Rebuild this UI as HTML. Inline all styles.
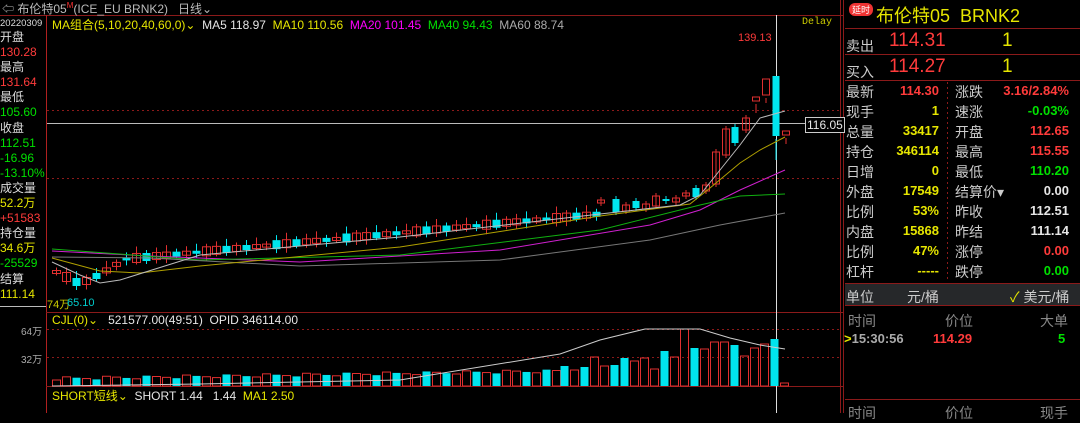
<!DOCTYPE html>
<html><head><meta charset="utf-8"><style>
*{margin:0;padding:0;box-sizing:border-box}
body{width:1080px;height:413px;background:#000;overflow:hidden;position:relative;font-family:"Liberation Sans","Noto Sans CJK SC",sans-serif;font-size:12px;color:#c8c8c8}
.a{position:absolute;white-space:nowrap}
.r{color:#ff3b3b}.g{color:#00e000}.y{color:#e6e600}.w{color:#e6e6e6}.m{color:#ff00ff}.gr{color:#aaa}
.rp div{position:absolute;white-space:nowrap;font-size:14px}
.num{font-weight:bold;text-align:right;font-size:13px!important}
</style></head><body>
<svg class="a" style="left:0;top:0" width="1080" height="413" id="s"></svg>
<div class="a" style="left:2px;top:0;font-size:12px;color:#bbb">⇦ 布伦特05<sup style="color:#f33;font-size:8px">M</sup>(ICE_EU BRNK2)&nbsp;&nbsp;&nbsp;日线⌄</div>
<div class="a" style="left:0;top:17px;font-size:9.5px;color:#ddd;line-height:14px">20220309</div>
<div class="a" style="left:0;top:30px;font-size:12px;line-height:15.1px;color:#ddd">开盘<br><span class="r">130.28</span><br>最高<br><span class="r">131.64</span><br>最低<br><span class="g">105.60</span><br>收盘<br><span class="g">112.51</span><br><span class="g">-16.96</span><br><span class="g">-13.10%</span><br>成交量<br><span class="y">52.2万</span><br><span class="r">+51583</span><br>持仓量<br><span class="y">34.6万</span><br><span class="g">-25529</span><br>结算<br><span class="y">111.14</span></div>
<div class="a" style="left:52px;top:16px;font-size:12px"><span class="y">MA组合(5,10,20,40,60,0)⌄</span>&nbsp;&nbsp;<span class="w">MA5 118.97</span>&nbsp;&nbsp;<span class="y">MA10 110.56</span>&nbsp;&nbsp;<span class="m">MA20 101.45</span>&nbsp;&nbsp;<span class="g">MA40 94.43</span>&nbsp;&nbsp;<span class="gr">MA60 88.74</span></div>
<div class="a y" style="left:802px;top:17px;font-family:'Liberation Mono',monospace;font-size:10px;color:#cc0">Delay</div>
<div class="a r" style="left:738px;top:32px;font-size:11px">139.13</div>
<div class="a w" style="left:805px;top:117px;font-size:12px;border:1px solid #ccc;padding:0 1px;background:#000">116.05</div>
<div class="a" style="left:47px;top:296px;font-size:11px;color:#cc0">74万</div>
<div class="a" style="left:67px;top:297px;font-size:11px;color:#0cc">65.10</div>
<div class="a" style="left:52px;top:313px;font-size:12px"><span class="y">CJL(0)⌄</span>&nbsp;&nbsp;&nbsp;<span class="w">521577.00(49:51)&nbsp;&nbsp;OPID 346114.00</span></div>
<div class="a gr" style="left:21px;top:323px;font-size:10px">64万</div>
<div class="a gr" style="left:21px;top:351px;font-size:10px">32万</div>
<div class="a" style="left:52px;top:387px;font-size:12px"><span class="y">SHORT短线⌄</span>&nbsp;&nbsp;<span class="w">SHORT 1.44&nbsp;&nbsp;&nbsp;1.44</span>&nbsp;&nbsp;<span class="y">MA1 2.50</span></div>
<div class="rp">
<div style="left:849px;top:3px;background:#e33;color:#fff;font-size:9px;border-radius:6px;padding:0 3px">延时</div>
<div style="left:876px;top:2px;font-size:18px;color:#e6e600">布伦特05&nbsp;&nbsp;BRNK2</div>
<div style="left:846px;top:36px;color:#ccc">卖出</div><div style="left:889px;top:30px;font-size:19px;color:#ff3b3b">114.31</div><div style="left:1002px;top:30px;font-size:19px;color:#e6e600">1</div>
<div style="left:846px;top:62px;color:#ccc">买入</div><div style="left:889px;top:56px;font-size:19px;color:#ff3b3b">114.27</div><div style="left:1002px;top:56px;font-size:19px;color:#e6e600">1</div>
</div>
<div class="rp" id="tb"></div>
<div class="rp">
<div style="left:846px;top:287px;color:#ccc">单位</div><div style="left:907px;top:287px;color:#ccc">元/桶</div><div style="left:1010px;top:287px;color:#ccc"><span class="y">✓</span> 美元/桶</div>
<div style="left:848px;top:311px;color:#888">时间</div><div style="left:945px;top:311px;color:#888">价位</div><div style="left:1040px;top:311px;color:#888">大单</div>
<div class="num" style="left:844px;top:331px;color:#aaa"><span class="y">&gt;</span>15:30:56</div><div class="num r" style="left:933px;top:331px">114.29</div><div class="num g" style="left:1058px;top:331px">5</div>
<div style="left:848px;top:403px;color:#888">时间</div><div style="left:945px;top:403px;color:#888">价位</div><div style="left:1040px;top:403px;color:#888">现手</div>
</div>
<script>
var rows=[["最新","114.30","r","涨跌","3.16/2.84%","r"],["现手","1","y","速涨","-0.03%","g"],["总量","33417","y","开盘","112.65","r"],["持仓","346114","y","最高","115.55","r"],["日增","0","y","最低","110.20","g"],["外盘","17549","y","结算价▾","0.00","w"],["比例","53%","y","昨收","112.51","w"],["内盘","15868","y","昨结","111.14","w"],["比例","47%","y","涨停","0.00","r"],["杠杆","-----","y","跌停","0.00","g"]];
var h="";rows.forEach(function(r,i){var t=82+i*20;
h+='<div style="left:846px;top:'+t+'px;color:#ccc">'+r[0]+'</div><div class="num '+r[2]+'" style="right:'+(1080-939)+'px;top:'+(t+1)+'px">'+r[1]+'</div><div style="left:955px;top:'+t+'px;color:#ccc">'+r[3]+'</div><div class="num '+r[5]+'" style="right:'+(1080-1069)+'px;top:'+(t+1)+'px">'+r[4]+'</div>';});
document.getElementById('tb').innerHTML=h;
var s="";function L(x1,y1,x2,y2,c,d){s+='<line x1="'+x1+'" y1="'+y1+'" x2="'+x2+'" y2="'+y2+'" stroke="'+c+'" '+(d?'stroke-dasharray="2,3"':'')+'/>';}
function R(x,y,w,hh,c,f){s+='<rect x="'+x+'" y="'+y+'" width="'+w+'" height="'+Math.max(hh,1)+'" '+(f?'fill="'+c+'"':'fill="none" stroke="'+c+'"')+'/>';}
L(0,15.5,843,15.5,"#8b1a1a");L(46.5,15,46.5,413,"#b02020");L(0,306.5,46,306.5,"#bbb");
L(46,312.5,843,312.5,"#8b1a1a");L(46,386.5,843,386.5,"#8b1a1a");
L(840.5,0,840.5,413,"#8b1a1a");L(843.5,0,843.5,413,"#8b1a1a");
L(47,110.5,840,110.5,"#8b1a1a",1);L(47,178.5,840,178.5,"#8b1a1a",1);
L(47,329.5,840,329.5,"#8b1a1a",1);L(47,357.5,840,357.5,"#8b1a1a",1);
L(47,123.5,840,123.5,"#bbb");L(776.5,15,776.5,413,"#ddd");L(825,130.5,840,130.5,"#cc0");
L(845,28.5,1080,28.5,"#8b1a1a");L(845,54.5,1080,54.5,"#8b1a1a");L(845,80.5,1080,80.5,"#8b1a1a");
L(947.5,82,947.5,282,"#8b1a1a",1);L(845,283.5,1080,283.5,"#8b1a1a");
s+='<rect x="845" y="284" width="235" height="21" fill="#26282a"/>';L(845,305.5,1080,305.5,"#8b1a1a");L(845,399.5,1080,399.5,"#8b1a1a");
function cy(x){if(x<80)return 270+(x-52)*0.5;if(x<100)return 284-(x-80)*0.5;if(x<125)return 274-(x-100)*0.6;if(x<600)return 259-(x-125)*0.095;return 214-(x-600)*0.08;}
for(var i=0;i<55;i++){var x=52+i*10;var c=cy(x+4);var up=(i*7%5)<3;var bh=3+(i*13%7);var col=up?"#e03030":"#00e5ee";
L(x+4.5,c-bh/2-3-(i%3)*2,x+4.5,c+bh/2+2+(i%4),col);R(x+0.5,c-bh/2,8,bh,col,!up);}
var rc=[[597,200,3,"r"],[612,199,13,"c"],[652,196,10,"r"],[662,199,2,"c"],[672,198,4,"r"],[682,193,3,"r",171],[692,188,9,"c"],[702,185,6,"r",174],[712,152,32,"r"],[722,129,26,"r"],[731,127,16,"c",111],[742,118,12,"r",114],[752,97,4,"r",46,113],[762,79,16,"r",67,103],[772,76,60,"c",72,160],[782,131,4,"r",126,144],[622,205,6,"r"],[632,201,7,"c"],[642,204,5,"r"]];
rc.forEach(function(k){var col=k[3]=="r"?"#e03030":"#00e5ee";var x=k[0];var t=k[5]||k[1]-3;var b=k[6]||k[1]+k[2]+3;L(x+4,t,x+4,b,col);R(x+0.5,k[1],7,k[2],col,k[3]=="c");});
function poly(pts,c){s+='<polyline fill="none" stroke="'+c+'" points="'+pts+'"/>';}
poly("52,251 150,256 300,262 500,250 650,225 700,210 740,190 785,170","#d020d0");
poly("52,249 200,260 400,255 600,230 700,205 740,196 785,194","#10b010");
poly("52,257 150,258 300,266 500,260 650,240 720,225 785,213","#777");
poly("52,258 100,271 140,273 200,266 400,247 600,216 690,204 710,188 740,163 760,150 785,137","#b0a000");
poly("52,262 80,275 100,283 120,280 200,255 400,237 600,214 680,205 700,195 720,170 740,145 760,118 785,111","#bbb");
for(var i=0;i<51;i++){var x=52+i*10;var hh=6+(i*11%4)+i*0.15;var up=(i*7%5)<3;R(x+0.5,386-hh,8,hh,up?"#e03030":"#00e5ee",!up);}
var vr=[[560,366,"c"],[570,370,"r"],[580,367,"c"],[590,357,"r"],[600,366,"r"],[610,365,"c"],[620,358,"c"],[630,361,"r"],[640,358,"r"],[650,369,"r"],[660,351,"c"],[670,357,"r"],[680,329,"r"],[690,348,"c"],[700,349,"r"],[710,342,"r"],[720,342,"r"],[730,345,"c"],[740,356,"r"],[750,348,"r"],[760,344,"r"],[770,339,"c"],[780,383,"r"]];
vr.forEach(function(k){R(k[0]+0.5,k[1],8,386-k[1],k[2]=="r"?"#e03030":"#00e5ee",k[2]=="c");});
poly("52,386 200,384 400,380 560,354 600,340 645,329 700,329 730,338 760,345 785,349","#ccc");
document.getElementById('s').innerHTML=s;
</script>
</body></html>
